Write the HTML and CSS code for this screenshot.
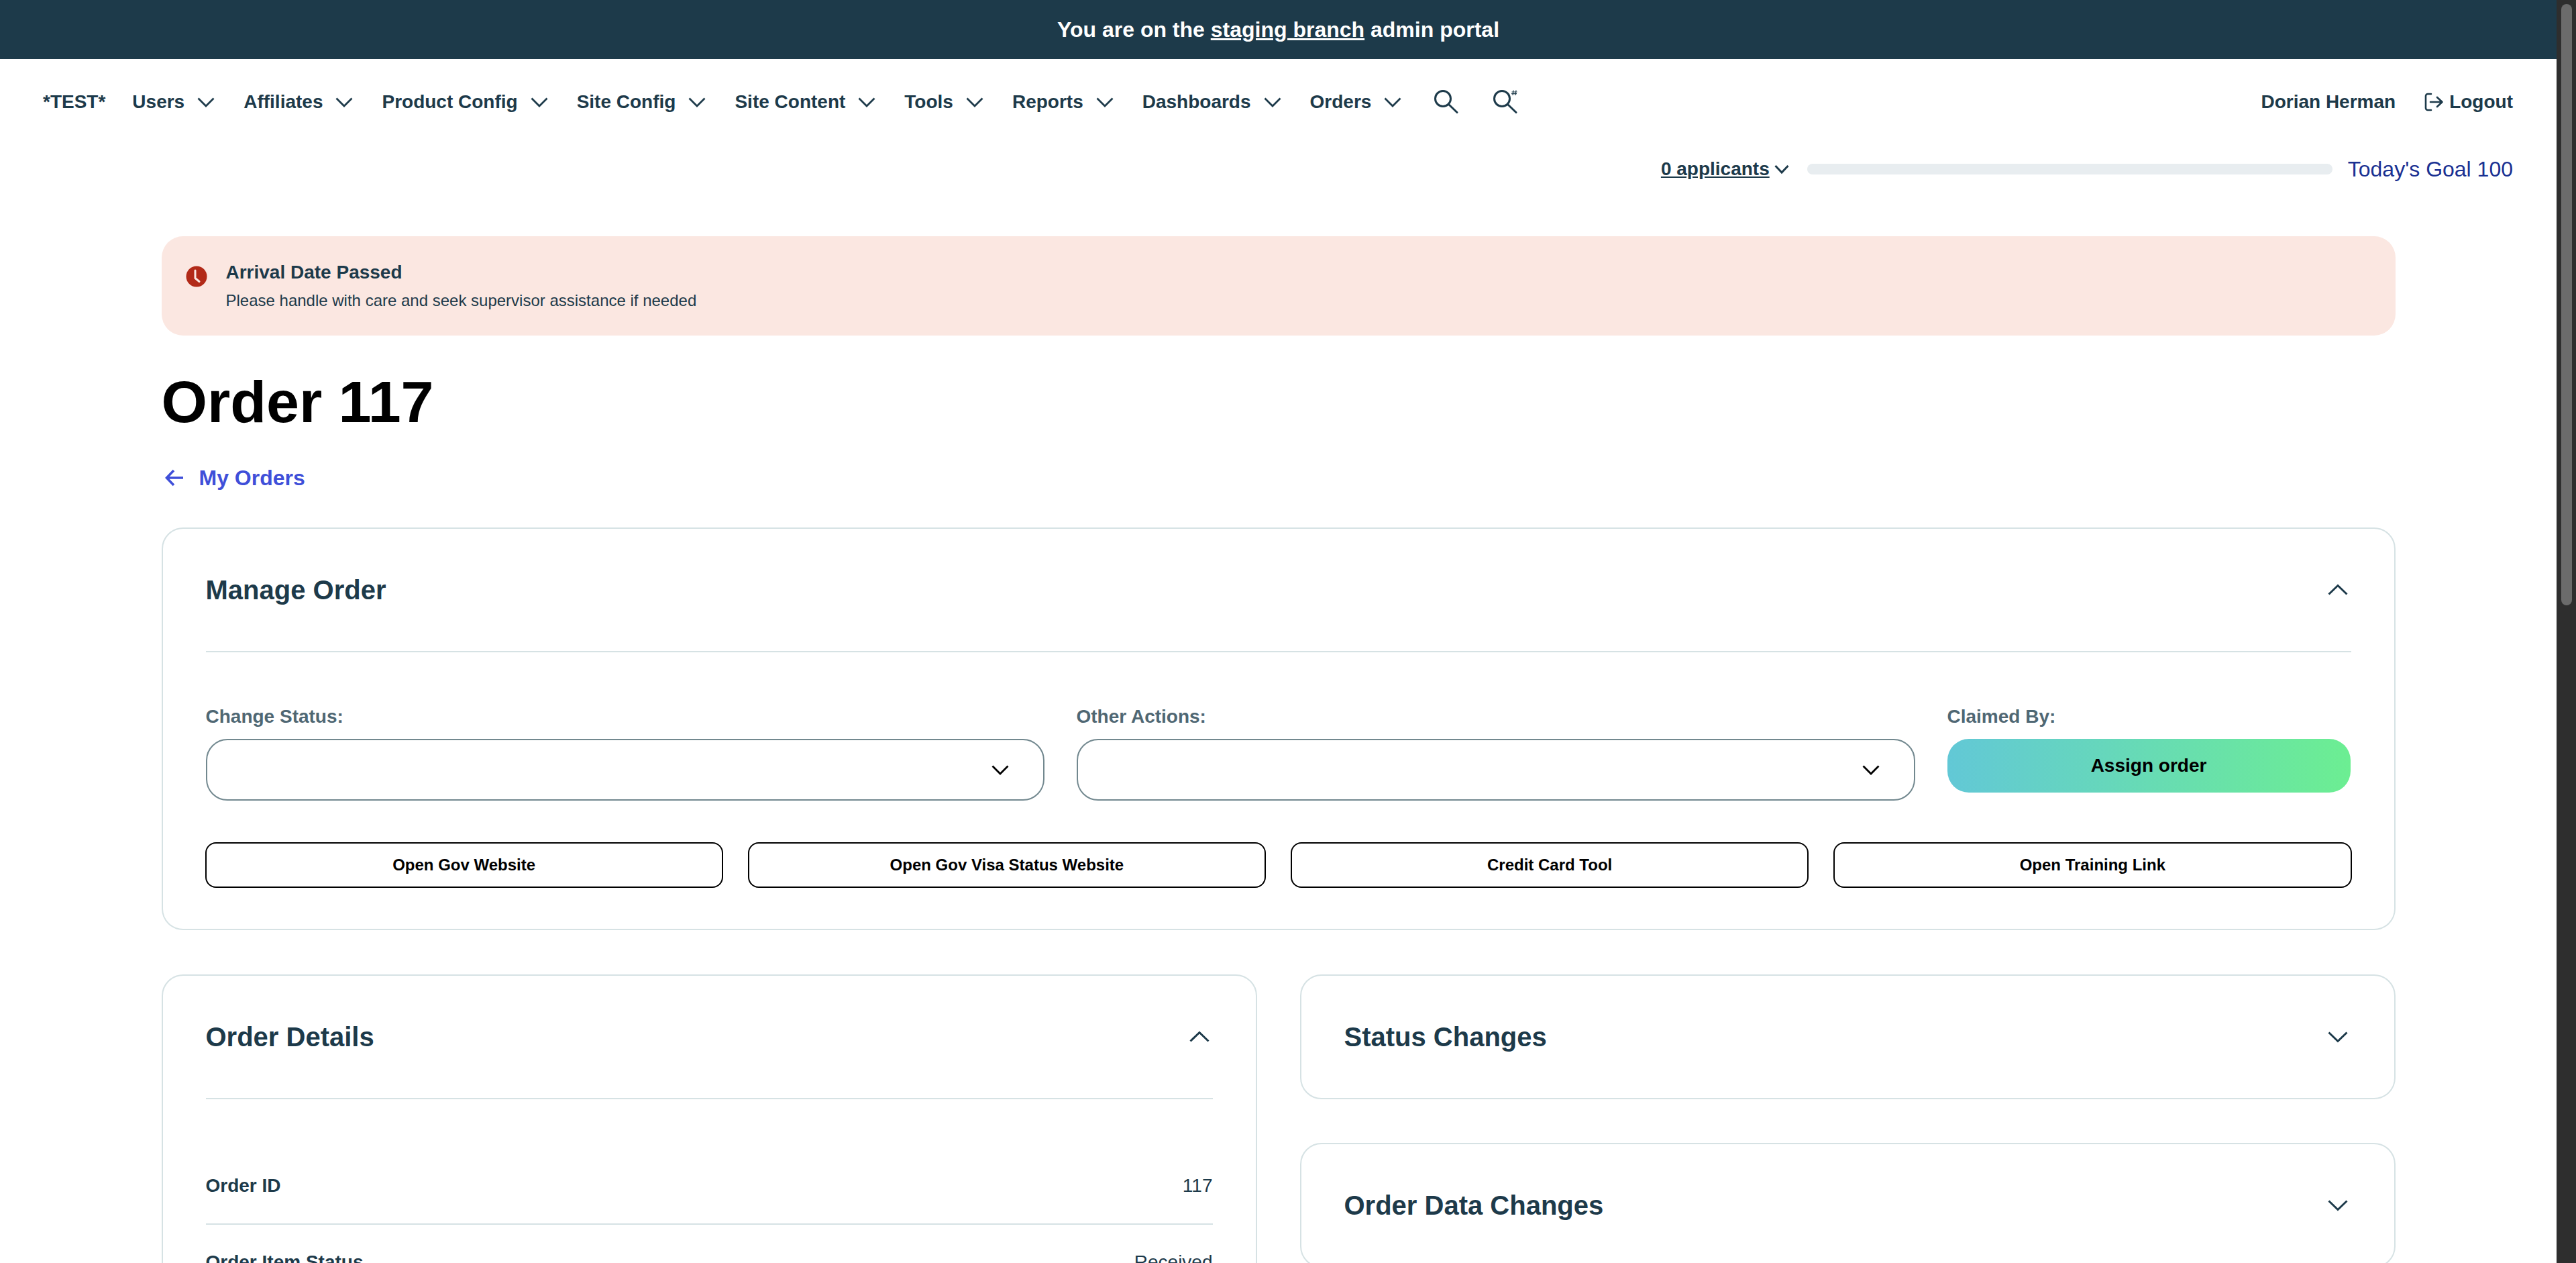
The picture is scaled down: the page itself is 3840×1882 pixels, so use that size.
FILE: index.html
```html
<!DOCTYPE html>
<html lang="en">
<head>
    <meta charset="UTF-8">
    <title>Order 117</title>
    <link rel="stylesheet" href="styles.css">
</head>
<body>
    <div class="page">
        <div class="content">
            <div class="staging-bar">You are on the <a href="#">staging branch</a> admin portal</div>

            <nav class="main-nav">
                <div class="nav-left">
                    <a class="nav-item" href="#">*TEST*</a>
                    <a class="nav-item" href="#">Users <svg class="chev" viewBox="0 0 32 32"><polyline points="4.5,10.5 16,22 27.5,10.5"/></svg></a>
                    <a class="nav-item" href="#">Affiliates <svg class="chev" viewBox="0 0 32 32"><polyline points="4.5,10.5 16,22 27.5,10.5"/></svg></a>
                    <a class="nav-item" href="#">Product Config <svg class="chev" viewBox="0 0 32 32"><polyline points="4.5,10.5 16,22 27.5,10.5"/></svg></a>
                    <a class="nav-item" href="#">Site Config <svg class="chev" viewBox="0 0 32 32"><polyline points="4.5,10.5 16,22 27.5,10.5"/></svg></a>
                    <a class="nav-item" href="#">Site Content <svg class="chev" viewBox="0 0 32 32"><polyline points="4.5,10.5 16,22 27.5,10.5"/></svg></a>
                    <a class="nav-item" href="#">Tools <svg class="chev" viewBox="0 0 32 32"><polyline points="4.5,10.5 16,22 27.5,10.5"/></svg></a>
                    <a class="nav-item" href="#">Reports <svg class="chev" viewBox="0 0 32 32"><polyline points="4.5,10.5 16,22 27.5,10.5"/></svg></a>
                    <a class="nav-item" href="#">Dashboards <svg class="chev" viewBox="0 0 32 32"><polyline points="4.5,10.5 16,22 27.5,10.5"/></svg></a>
                    <a class="nav-item" href="#">Orders <svg class="chev" viewBox="0 0 32 32"><polyline points="4.5,10.5 16,22 27.5,10.5"/></svg></a>
                    <a class="nav-icon" href="#"><svg viewBox="0 0 36 36"><circle cx="13" cy="13" r="11.5"/><line x1="21.5" y1="21.5" x2="34" y2="33.5"/></svg></a>
                    <a class="nav-icon" href="#"><svg viewBox="0 0 36 36"><circle cx="13" cy="13" r="11.5"/><line x1="21.5" y1="21.5" x2="34" y2="33.5"/><path class="hash" d="M30 .5 29 8M34 .5 33 8M27.5 3h8M27 5.7h8"/></svg></a>
                </div>
                <div class="nav-right">
                    <span class="user-name">Dorian Herman</span>
                    <a class="logout" href="#">
                        <svg viewBox="0 0 30 30"><path d="M11 3H6a3 3 0 0 0-3 3v18a3 3 0 0 0 3 3h5"/><path d="M10 15h17M20 8l7.5 7-7.5 7"/></svg>
                        Logout
                    </a>
                </div>
            </nav>

            <div class="goal-row">
                <a class="applicants" href="#">0 applicants</a>
                <svg class="goal-chev" viewBox="0 0 24 24"><polyline points="2.5,7 12,17 21.5,7"/></svg>
                <div class="goal-bar"></div>
                <span class="goal-text">Today's Goal 100</span>
            </div>

            <main class="container">
                <div class="alert">
                    <svg class="alert-icon" viewBox="0 0 32 32"><circle cx="16" cy="16" r="15.5"/><path d="M14 7v11.5l6 5"/></svg>
                    <div>
                        <div class="alert-title">Arrival Date Passed</div>
                        <div class="alert-text">Please handle with care and seek supervisor assistance if needed</div>
                    </div>
                </div>

                <h1 class="page-title">Order 117</h1>

                <a class="back-link" href="#">
                    <svg viewBox="0 0 30 30"><path d="M27 15H3M13 4 2.5 15 13 26"/></svg>
                    My Orders
                </a>

                <section class="card">
                    <div class="card-head">
                        <h2>Manage Order</h2>
                        <svg class="card-chev" viewBox="0 0 32 32"><polyline points="2.5,22.5 16,9.5 29.5,22.5"/></svg>
                    </div>
                    <div class="manage-body">
                        <div class="manage-fields">
                            <div class="field">
                                <label>Change Status:</label>
                                <div class="select"><svg class="chev" viewBox="0 0 32 32"><polyline points="4.5,10.5 16,22 27.5,10.5"/></svg></div>
                            </div>
                            <div class="field">
                                <label>Other Actions:</label>
                                <div class="select"><svg class="chev" viewBox="0 0 32 32"><polyline points="4.5,10.5 16,22 27.5,10.5"/></svg></div>
                            </div>
                            <div class="field">
                                <label>Claimed By:</label>
                                <button class="assign-btn">Assign order</button>
                            </div>
                        </div>
                        <div class="tool-buttons">
                            <button>Open Gov Website</button>
                            <button>Open Gov Visa Status Website</button>
                            <button>Credit Card Tool</button>
                            <button>Open Training Link</button>
                        </div>
                    </div>
                </section>

                <div class="columns">
                    <section class="card">
                        <div class="card-head">
                            <h2>Order Details</h2>
                            <svg class="card-chev" viewBox="0 0 32 32"><polyline points="2.5,22.5 16,9.5 29.5,22.5"/></svg>
                        </div>
                        <div class="detail-list">
                            <div class="detail-row"><b>Order ID</b><span>117</span></div>
                            <div class="detail-row"><b>Order Item Status</b><span>Received</span></div>
                        </div>
                    </section>
                    <div class="side-cards">
                        <section class="card closed">
                            <div class="card-head">
                                <h2>Status Changes</h2>
                                <svg class="card-chev" viewBox="0 0 32 32"><polyline points="2.5,9.5 16,22.5 29.5,9.5"/></svg>
                            </div>
                        </section>
                        <section class="card closed">
                            <div class="card-head">
                                <h2>Order Data Changes</h2>
                                <svg class="card-chev" viewBox="0 0 32 32"><polyline points="2.5,9.5 16,22.5 29.5,9.5"/></svg>
                            </div>
                        </section>
                    </div>
                </div>
            </main>
        </div>

        <div class="scrollbar"><div class="scrollbar-thumb"></div></div>
    </div>
</body>
</html>
```

FILE: styles.css
```css
* {
    margin: 0;
    padding: 0;
    box-sizing: border-box;
    font-family: "Liberation Sans", Arial, sans-serif;
}

body {
    background-color: #fff;
    color: #1d3a4a;
    overflow: hidden;
}

svg {
    fill: none;
    stroke: currentColor;
    flex-shrink: 0;
}

a {
    color: inherit;
    text-decoration: none;
}

.page {
    display: flex;
    height: 100vh;
    overflow: hidden;
}

.content {
    flex: 1;
    min-width: 0;
    overflow: hidden;
}

/* scrollbar */
.scrollbar {
    width: 29px;
    background-color: #2e2e2e;
    padding: 6px 6px 0 7px;
}

.scrollbar-thumb {
    height: 896px;
    border-radius: 8px;
    background-color: #6b6b6b;
}

/* top */
.staging-bar {
    height: 88px;
    background-color: #1d3a4a;
    color: #fff;
    font-size: 32px;
    font-weight: bold;
    line-height: 88px;
    text-align: center;
}

.staging-bar a {
    text-decoration: underline;
}

.main-nav {
    display: flex;
    justify-content: space-between;
    align-items: center;
    height: 128px;
    padding: 0 65px 0 64px;
}

.nav-left {
    display: flex;
    align-items: center;
    gap: 40px;
}

.nav-item {
    display: flex;
    align-items: center;
    gap: 16px;
    font-size: 28px;
    font-weight: bold;
    white-space: nowrap;
}

.chev {
    width: 32px;
    height: 32px;
    stroke-width: 2.8;
}

.nav-icon {
    display: flex;
    width: 36px;
    height: 36px;
    margin: 0 6px;
}

.nav-icon svg {
    width: 36px;
    height: 36px;
    overflow: visible;
    stroke-width: 3;
}

.nav-icon line {
    stroke-linecap: round;
}

.nav-icon .hash {
    stroke-width: 1.2;
}

.nav-right {
    display: flex;
    align-items: center;
    gap: 42px;
    font-size: 28px;
    font-weight: bold;
}

.logout {
    display: flex;
    align-items: center;
    gap: 8px;
}

.logout svg {
    width: 30px;
    height: 30px;
    stroke-width: 2.6;
    stroke-linecap: round;
    stroke-linejoin: round;
}

.goal-row {
    display: flex;
    align-items: center;
    justify-content: flex-end;
    height: 72px;
    padding-right: 65px;
}

.applicants {
    font-size: 28px;
    font-weight: bold;
    text-decoration: underline;
}

.goal-chev {
    width: 24px;
    height: 24px;
    margin-left: 6px;
    stroke-width: 3;
}

.goal-bar {
    width: 783px;
    height: 16px;
    margin: 0 23px 0 26px;
    border-radius: 8px;
    background-color: #e8edf0;
}

.goal-text {
    font-size: 32px;
    color: #1a3192;
}

/* main */
.container {
    width: 3330px;
    margin: 0 auto;
    padding-top: 64px;
}

.alert {
    display: flex;
    align-items: center;
    gap: 28px;
    height: 148px;
    padding: 0 36px;
    border-radius: 32px;
    background-color: #fbe7e1;
}

.alert-icon {
    width: 32px;
    height: 32px;
    margin-bottom: 28px;
}

.alert-icon circle {
    fill: #b22a18;
    stroke: none;
}

.alert-icon path {
    stroke: #fbe7e1;
    stroke-width: 3;
    stroke-linecap: round;
    stroke-linejoin: round;
}

.alert-title {
    margin-top: 2px;
    margin-bottom: 6px;
    font-size: 28px;
    font-weight: bold;
    line-height: 36px;
}

.alert-text {
    font-size: 24px;
    line-height: 36px;
}

.page-title {
    margin-top: 44px;
    font-size: 88px;
    line-height: 110px;
    color: #000;
}

.back-link {
    display: flex;
    align-items: center;
    gap: 21px;
    margin-top: 38px;
    height: 40px;
    font-size: 32px;
    font-weight: bold;
    color: #3f4fd9;
}

.back-link svg {
    width: 30px;
    height: 30px;
    margin-left: 5px;
    stroke-width: 3.6;
}

.card {
    margin-top: 54px;
    padding: 0 64px;
    border: 2px solid #d6e2e4;
    border-radius: 32px;
    background-color: #fff;
}

.card-head {
    display: flex;
    align-items: center;
    justify-content: space-between;
    height: 184px;
    padding-right: 4px;
    border-bottom: 2px solid #d6e2e4;
}

.card-head h2 {
    font-size: 40px;
    line-height: 48px;
}

.card-chev {
    width: 32px;
    height: 32px;
    stroke-width: 3;
}

.closed .card-head {
    height: 182px;
    border-bottom: none;
}

.manage-body {
    padding: 80px 0 61px;
}

.manage-fields {
    display: grid;
    grid-template-columns: 1250px 1250px 601px;
    gap: 48px;
}

.field label {
    display: block;
    height: 49px;
    font-size: 28px;
    font-weight: bold;
    line-height: 32px;
    color: #4f6773;
}

.select {
    display: flex;
    align-items: center;
    justify-content: flex-end;
    height: 92px;
    padding-right: 48px;
    border: 2px solid #72888f;
    border-radius: 32px;
    color: #000;
}

.assign-btn {
    display: block;
    width: 100%;
    height: 80px;
    border: none;
    border-radius: 32px;
    background: linear-gradient(90deg, #62c8d6, #6cee92);
    color: #000;
    font-size: 28px;
    font-weight: bold;
}

.tool-buttons {
    display: grid;
    grid-template-columns: repeat(4, 1fr);
    gap: 37px;
    margin: 62px -1px 0;
}

.tool-buttons button {
    height: 68px;
    border: 2px solid #000;
    border-radius: 16px;
    background-color: #fff;
    color: #000;
    font-size: 24px;
    font-weight: bold;
}

.columns {
    display: grid;
    grid-template-columns: 1633px 1633px;
    gap: 64px;
    margin-top: 66px;
}

.columns .card {
    margin-top: 0;
}

.side-cards {
    display: flex;
    flex-direction: column;
    gap: 65px;
}

.detail-list {
    padding-top: 73px;
}

.detail-row {
    display: flex;
    justify-content: space-between;
    align-items: center;
    height: 114px;
    border-bottom: 2px solid #d6e2e4;
    font-size: 28px;
}
```
